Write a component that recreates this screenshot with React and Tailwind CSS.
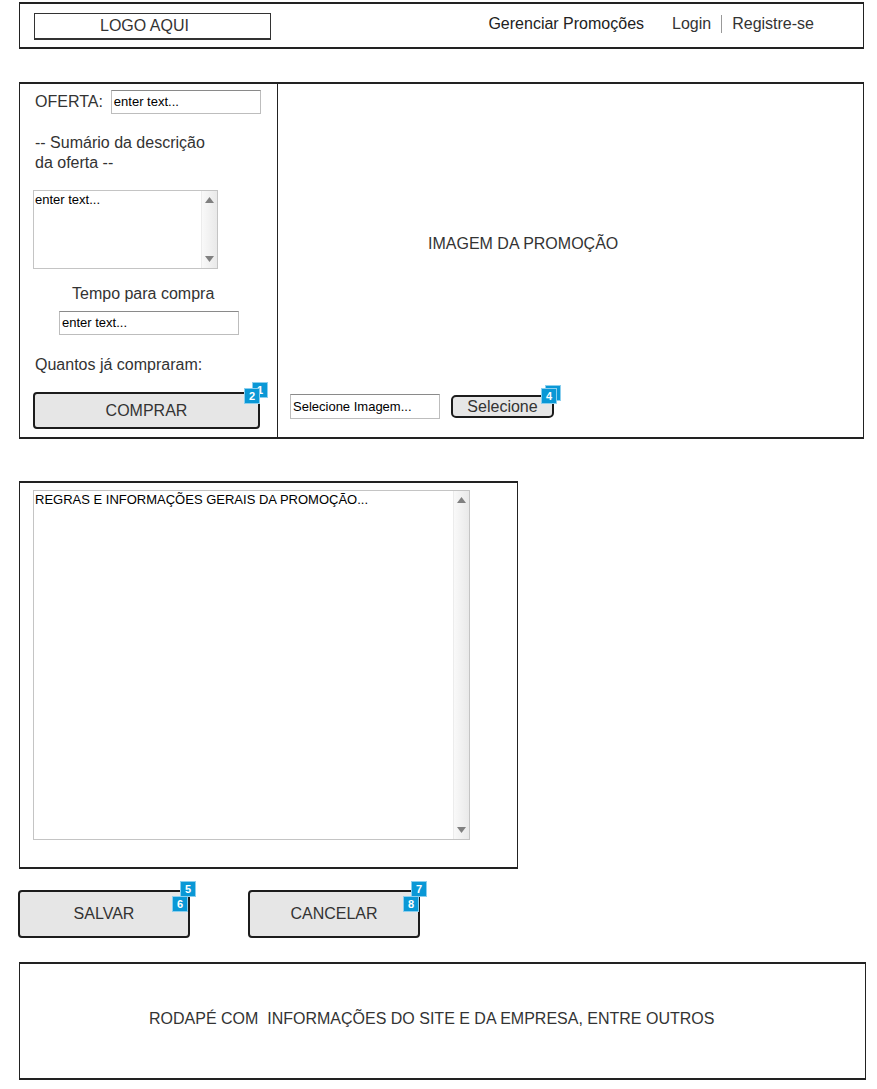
import React from 'react';

// sketchy wireframe bits
const Badge = ({ n }) => (
  <div className="w-[16px] h-[16px] bg-[#0a98d6] border border-[#8ccfee] text-white text-[11px] font-bold leading-[14px] text-center">
    {n}
  </div>
);

const Arrow = ({ up }) => (
  <svg width="9" height="6" viewBox="0 0 9 6">
    <polygon points={up ? '4.5,0 9,6 0,6' : '0,0 9,0 4.5,6'} fill="#808080" />
  </svg>
);

const ScrollArea = ({ text, className }) => (
  <div className={`flex border border-[#c4c4c4] bg-white ${className}`}>
    <div className="flex-1 px-[1px] pt-[1px] text-[13px] leading-[16px] text-black">{text}</div>
    <div className="w-[16px] flex flex-col items-center justify-between py-[6px] bg-gradient-to-r from-[#f9f9f9] to-[#e9e9e9] border-l border-[#ececec]">
      <Arrow up />
      <Arrow />
    </div>
  </div>
);

const Input = ({ text, className }) => (
  <div className={`border border-[#bdbdbd] border-t-[#8a8a8a] bg-white px-[2px] text-[13px] leading-[20px] text-black flex items-center ${className}`}>
    {text}
  </div>
);

const SketchButton = ({ label, className, children }) => (
  <div className={`relative bg-[#e6e6e6] border-2 border-[#1c1c1c] rounded-[4px] flex items-center justify-center text-[16px] text-[#333] ${className}`}>
    {label}
    {children}
  </div>
);

export default function App() {
  return (
    <div className="w-[877px] h-[1089px] bg-white pt-[2px] font-['Liberation_Sans',Arial,sans-serif] text-[#2a2a2a]">
      {/* Header */}
      <div className="ml-[19px] w-[845px] h-[47px] border-y-2 border-x border-[#222] flex items-center">
        <div className="ml-[14px] mt-[2px] w-[237px] h-[27px] border border-[#333] border-b-2 flex items-center pl-[65px] text-[16px] text-[#333]">
          LOGO AQUI
        </div>
        <div className="flex-1" />
        <div className="flex items-center text-[16px] text-[#222] -mt-[3px] pr-[49px]">
          <span>Gerenciar Promoções</span>
          <span className="ml-[28px] text-[#333]">Login</span>
          <span className="mx-[10px] w-[1px] h-[18px] bg-[#999]" />
          <span className="text-[#333]">Registre-se</span>
        </div>
      </div>

      {/* Main offer area */}
      <div className="ml-[19px] mt-[33px] flex h-[357px]">
        <div className="w-[259px] h-full border-y-2 border-x border-[#222] flex flex-col pl-[13px] pt-[6px]">
          <div className="flex items-center h-[24px]">
            <span className="ml-[2px] text-[16px] text-[#333]">OFERTA:</span>
            <Input text="enter text..." className="ml-[8px] w-[150px] h-[24px]" />
          </div>
          <div className="mt-[19px] ml-[2px] text-[16px] leading-[20px] text-[#333]">
            -- Sumário da descrição
            <br />
            da oferta --
          </div>
          <ScrollArea text="enter text..." className="mt-[17px] w-[185px] h-[79px]" />
          <div className="mt-[15px] ml-[39px] text-[16px] leading-[20px] text-[#333]">Tempo para compra</div>
          <Input text="enter text..." className="mt-[7px] ml-[26px] w-[180px] h-[24px]" />
          <div className="mt-[20px] ml-[2px] text-[16px] leading-[20px] text-[#333]">Quantos já compraram:</div>
          <SketchButton label="COMPRAR" className="mt-[17px] w-[227px] h-[37px]">
            <div className="absolute -right-[10px] -top-[12px]"><Badge n="1" /></div>
            <div className="absolute -right-[2px] -top-[6px]"><Badge n="2" /></div>
          </SketchButton>
        </div>
        <div className="w-[586px] h-full border-y-2 border-r border-[#222] flex flex-col">
          <div className="mt-[150px] ml-[150px] text-[16px] leading-[20px] text-[#333]">IMAGEM DA PROMOÇÃO</div>
          <div className="flex-1" />
          <div className="flex items-center pl-[12px] mb-[18px]">
            <Input text="Selecione Imagem..." className="w-[150px] h-[25px]" />
            <SketchButton label="Selecione" className="ml-[11px] w-[103px] h-[23px] rounded-[5px]">
              <div className="absolute -right-[9px] -top-[12px]"><Badge n="" /></div>
              <div className="absolute -right-[5px] -top-[9px]"><Badge n="4" /></div>
            </SketchButton>
          </div>
        </div>
      </div>

      {/* Rules */}
      <div className="ml-[19px] mt-[42px] w-[499px] h-[388px] border-y-2 border-x border-[#222] pl-[13px] pt-[7px]">
        <ScrollArea text="REGRAS E INFORMAÇÕES GERAIS DA PROMOÇÃO..." className="w-[437px] h-[350px]" />
      </div>

      {/* Actions */}
      <div className="ml-[18px] mt-[21px] flex gap-[58px]">
        <SketchButton label="SALVAR" className="w-[172px] h-[48px]">
          <div className="absolute -right-[8px] -top-[11px]"><Badge n="5" /></div>
          <div className="absolute right-[0px] top-[4px]"><Badge n="6" /></div>
        </SketchButton>
        <SketchButton label="CANCELAR" className="w-[172px] h-[48px]">
          <div className="absolute -right-[9px] -top-[11px]"><Badge n="7" /></div>
          <div className="absolute -right-[1px] top-[4px]"><Badge n="8" /></div>
        </SketchButton>
      </div>

      {/* Footer */}
      <div className="ml-[19px] mt-[24px] w-[847px] h-[118px] border-y-2 border-x border-[#222] flex items-center pl-[129px] pb-[4px] text-[16px] text-[#333]">
        RODAPÉ COM&nbsp; INFORMAÇÕES DO SITE E DA EMPRESA, ENTRE OUTROS
      </div>
    </div>
  );
}
